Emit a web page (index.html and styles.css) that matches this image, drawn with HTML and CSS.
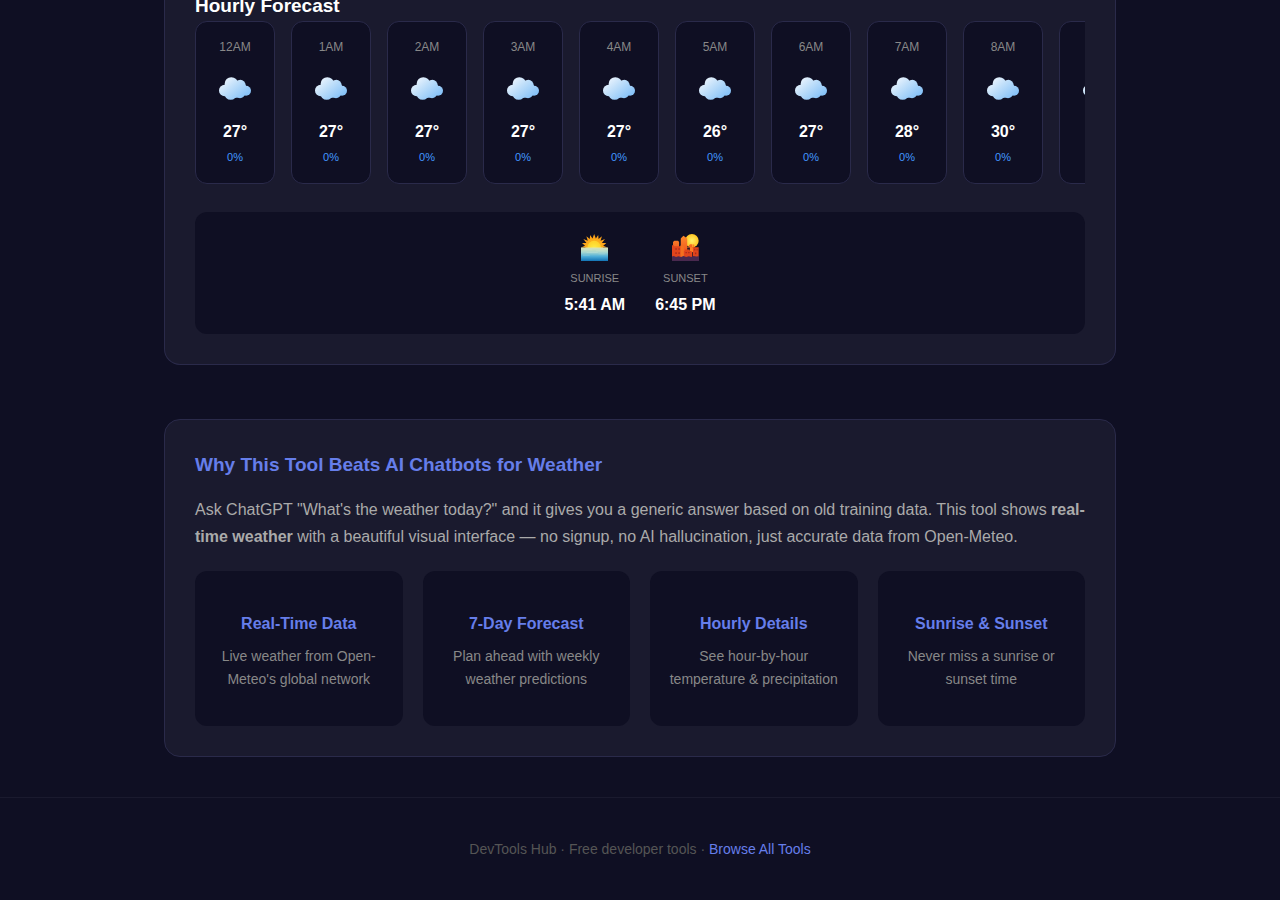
FILE: index.html
```html
<!DOCTYPE html>
<html lang="en">
<head>
<meta charset="utf-8">
<meta name="viewport" content="width=device-width, initial-scale=1">
<title>Weather Forecast</title>
<link rel="stylesheet" href="styles.css">
</head>
<body>
<svg class="defs" width="0" height="0" aria-hidden="true">
  <defs>
    <linearGradient id="cloudFill" gradientUnits="userSpaceOnUse" x1="20" y1="0" x2="72" y2="64">
      <stop offset="0" stop-color="#edf5fe"/><stop offset=".4" stop-color="#c2e0fa"/><stop offset="1" stop-color="#86c2f8"/>
    </linearGradient>
    <symbol id="cloud" viewBox="0 0 96 68">
      <g fill="url(#cloudFill)">
        <circle cx="37" cy="20" r="20"/><circle cx="64" cy="24" r="16"/><circle cx="81" cy="41" r="15"/>
        <circle cx="17" cy="40" r="17"/><circle cx="35" cy="49" r="19"/><circle cx="63" cy="48" r="15"/>
        <path d="M17 24 24 10H50L72 12 82 28V52L62 60 38 64 18 54Z"/>
      </g>
    </symbol>
  </defs>
</svg>
<div class="page">
<main class="container">
  <section class="card forecast">
    <h2 class="forecast-title">Hourly Forecast</h2>
    <div class="hours">
      <div class="hour"><span class="hour-time">12AM</span><svg class="hour-icon" aria-hidden="true"><use href="#cloud"/></svg><span class="hour-temp">27°</span><span class="hour-rain">0%</span></div>
      <div class="hour"><span class="hour-time">1AM</span><svg class="hour-icon" aria-hidden="true"><use href="#cloud"/></svg><span class="hour-temp">27°</span><span class="hour-rain">0%</span></div>
      <div class="hour"><span class="hour-time">2AM</span><svg class="hour-icon" aria-hidden="true"><use href="#cloud"/></svg><span class="hour-temp">27°</span><span class="hour-rain">0%</span></div>
      <div class="hour"><span class="hour-time">3AM</span><svg class="hour-icon" aria-hidden="true"><use href="#cloud"/></svg><span class="hour-temp">27°</span><span class="hour-rain">0%</span></div>
      <div class="hour"><span class="hour-time">4AM</span><svg class="hour-icon" aria-hidden="true"><use href="#cloud"/></svg><span class="hour-temp">27°</span><span class="hour-rain">0%</span></div>
      <div class="hour"><span class="hour-time">5AM</span><svg class="hour-icon" aria-hidden="true"><use href="#cloud"/></svg><span class="hour-temp">26°</span><span class="hour-rain">0%</span></div>
      <div class="hour"><span class="hour-time">6AM</span><svg class="hour-icon" aria-hidden="true"><use href="#cloud"/></svg><span class="hour-temp">27°</span><span class="hour-rain">0%</span></div>
      <div class="hour"><span class="hour-time">7AM</span><svg class="hour-icon" aria-hidden="true"><use href="#cloud"/></svg><span class="hour-temp">28°</span><span class="hour-rain">0%</span></div>
      <div class="hour"><span class="hour-time">8AM</span><svg class="hour-icon" aria-hidden="true"><use href="#cloud"/></svg><span class="hour-temp">30°</span><span class="hour-rain">0%</span></div>
      <div class="hour"><span class="hour-time"></span><svg class="hour-icon" aria-hidden="true"><use href="#cloud"/></svg><span class="hour-temp"></span><span class="hour-rain"></span></div>
    </div>
    <div class="sun">
      <div class="sun-item">
        <svg class="sun-icon" viewBox="0 0 80 80" aria-hidden="true">
          <defs>
            <linearGradient id="sea" x1="0" y1="0" x2="0" y2="1"><stop offset="0" stop-color="#dde3b4"/><stop offset=".35" stop-color="#a9d8d0"/><stop offset=".65" stop-color="#50afd8"/><stop offset="1" stop-color="#1273b5"/></linearGradient>
            <radialGradient id="sunDisc" cx=".5" cy=".6" r=".5"><stop offset="0" stop-color="#fff04a"/><stop offset="1" stop-color="#ffd52c"/></radialGradient>
          </defs>
          <path fill="#fba31a" d="M0 40 12 35 3 27 16 27 7 15 20 20 16 7 26 15 27 3 34 13 39 0 44 13 51 3 52 15 62 7 58 20 71 15 62 27 75 27 66 35 78 40Z"/>
          <circle cx="39" cy="40" r="26" fill="#fbae1c"/>
          <circle cx="39" cy="40" r="20" fill="url(#sunDisc)"/>
          <rect y="40" width="80" height="40" fill="url(#sea)"/>
          <path d="M8 47h26M44 50h27M16 55h34M52 59h20M6 63h20" stroke="#e3f2e6" stroke-opacity=".3" stroke-width="2"/>
        </svg>
        <span class="sun-label">SUNRISE</span><span class="sun-time">5:41 AM</span>
      </div>
      <div class="sun-item">
        <svg class="sun-icon" viewBox="0 0 80 80" aria-hidden="true">
          <defs>
            <linearGradient id="tower" x1="0" y1="0" x2="0" y2="1"><stop offset="0" stop-color="#ff8a2b"/><stop offset="1" stop-color="#e8431b"/></linearGradient>
            <radialGradient id="dusk"><stop offset="0" stop-color="#fff36a"/><stop offset="1" stop-color="#ffc522"/></radialGradient>
          </defs>
          <circle cx="59" cy="20" r="20" fill="url(#dusk)"/>
          <path fill="url(#tower)" d="M3 24 7 20h11l3 4v14h5V13l4-4 4-4 5 4 6 4v25h5v-5l4-3h6v40H3Z"/>
          <path fill="#ff7e24" d="M46 50V39h15V31h5v24Z"/>
          <rect x="45" y="40" width="8" height="9" fill="#211426"/>
          <path fill="#e2451c" d="M0 68V33h6v3h21v32ZM33 68V50h5v-4h14v4h6v18ZM62 68V39h17v29Z"/>
          <path fill="#f4701f" d="M25 68V34h10v34Z"/>
          <path fill="#a52c1f" d="M10 42h4v5h-4ZM19 42h4v5h-4ZM10 54h4v5h-4ZM19 54h4v5h-4ZM40 53h4v4h-4ZM48 53h4v4h-4ZM66 44h3v5h-3ZM73 44h3v5h-3ZM68 55h4v5h-4Z"/>
          <path fill="#49294f" d="M0 80V67l5-2 7 3 7-2 8 2 7-3 8 3 8-2 7 2 7-3 8 2 8-1v14Z"/>
        </svg>
        <span class="sun-label">SUNSET</span><span class="sun-time">6:45 PM</span>
      </div>
    </div>
  </section>
  <section class="card about">
    <h2 class="about-title">Why This Tool Beats AI Chatbots for Weather</h2>
    <p class="about-text">Ask ChatGPT "What's the weather today?" and it gives you a generic answer based on old training data. This tool shows <strong>real-time weather</strong> with a beautiful visual interface — no signup, no AI hallucination, just accurate data from Open-Meteo.</p>
    <div class="features">
      <div class="feature"><h3 class="feature-title">Real-Time Data</h3><p class="feature-text">Live weather from Open-Meteo's global network</p></div>
      <div class="feature"><h3 class="feature-title">7-Day Forecast</h3><p class="feature-text">Plan ahead with weekly weather predictions</p></div>
      <div class="feature"><h3 class="feature-title">Hourly Details</h3><p class="feature-text">See hour-by-hour temperature &amp; precipitation</p></div>
      <div class="feature"><h3 class="feature-title">Sunrise &amp; Sunset</h3><p class="feature-text">Never miss a sunrise or sunset time</p></div>
    </div>
  </section>
</main>
<footer class="footer">DevTools Hub · Free developer tools · <a class="footer-link" href="#">Browse All Tools</a></footer>
</div>
</body>
</html>
```
FILE: styles.css
```css
* { box-sizing: border-box; margin: 0; padding: 0; }
body { font-family: "Liberation Sans", Arial, sans-serif; font-size: 16px; color: #fff; background: #0f0f23; }
.defs { position: absolute; }
.container { max-width: 1000px; margin: 0 auto; padding: 0 24px; }
.card { background: #1a1a2e; border: 1px solid #2a2a4a; border-radius: 16px; padding: 30px; }
.forecast { border-top: 0; border-radius: 0 0 16px 16px; padding-top: 0; margin-bottom: 54px; }
.forecast-title { font-size: 19px; line-height: 12px; margin-bottom: 9px; }
.hours { display: flex; gap: 16px; overflow: hidden; margin-bottom: 28px; }
.hour { flex: 0 0 80px; display: flex; flex-direction: column; align-items: center; padding: 15px 0; background: #0f0f23; border: 1px solid #2a2a4a; border-radius: 12px; }
.hour-time { font-size: 12px; line-height: 20px; height: 20px; color: #888; }
.hour-icon { width: 32px; height: 23px; margin: 20px 0 19px; }
.hour-temp { font-weight: 700; line-height: 26px; height: 26px; }
.hour-rain { font-size: 11px; line-height: 18px; height: 18px; margin: 3px 0 2px; color: #4299ff; }
.sun { display: flex; justify-content: center; gap: 30px; padding: 16px 20px; background: #0f0f23; border-radius: 12px; }
.sun-item { display: flex; flex-direction: column; align-items: center; }
.sun-icon { width: 27px; height: 27px; margin: 6px 0 7px; }
.sun-label { font-size: 11px; line-height: 20px; color: #888; }
.sun-time { font-weight: 700; line-height: 26px; margin: 4px 0 0; }
.about { margin-bottom: 40px; }
.about-title { font-size: 19px; line-height: 30px; color: #667eea; margin-bottom: 16px; }
.about-text { line-height: 27px; color: #aaa; margin-bottom: 21px; }
.features { display: grid; grid-template-columns: repeat(4, 1fr); gap: 20px; }
.feature { background: #0f0f23; border-radius: 12px; padding: 39px 16px 35px; text-align: center; }
.feature-title { font-size: 16px; line-height: 27px; color: #667eea; margin-bottom: 8px; }
.feature-text { font-size: 14px; line-height: 23px; color: #888; }
.footer { border-top: 1px solid #1a1a2e; padding: 40px 24px; text-align: center; font-size: 14px; line-height: 22px; color: #555; }
.footer-link { color: #667eea; text-decoration: none; }
```
